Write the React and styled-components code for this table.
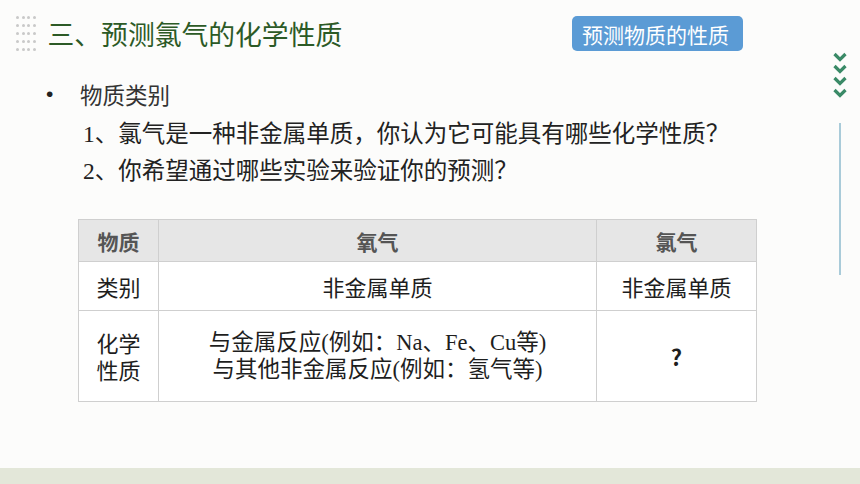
import React from "react";
import styled, { createGlobalStyle } from "styled-components";

const GlobalStyle = createGlobalStyle`
  html, body {
    margin: 0;
    padding: 0;
    background: #fcfcfb;
  }
  body {
    font-family: "Liberation Serif", "Noto Sans CJK SC", serif;
    color: #222;
  }
`;

const Slide = styled.div`
  width: 860px;
  height: 484px;
  display: flex;
  flex-direction: column;
  overflow: hidden;
`;

const Body = styled.div`
  flex: 1;
  display: flex;
`;

const Main = styled.div`
  flex: 1;
  display: flex;
  flex-direction: column;
`;

const Rail = styled.div`
  width: 40px;
  display: flex;
  flex-direction: column;
  align-items: center;
  padding-top: 52px;
`;

const RailLine = styled.div`
  width: 2px;
  height: 152px;
  margin-top: 24px;
  margin-left: -1px;
  background: #a9cbd9;
`;

const Footer = styled.div`
  height: 16px;
  background: #e3e7d9;
`;

const Header = styled.div`
  display: flex;
  align-items: center;
  padding: 16px 77px 0 16px;
  height: 35px;
`;

const Dots = styled.div`
  display: grid;
  grid-template-columns: repeat(4, 3px);
  grid-auto-rows: 3px;
  column-gap: 2.5px;
  row-gap: 5px;
`;

const Dot = styled.span`
  width: 3px;
  height: 3px;
  border-radius: 50%;
  background: #c9c9c9;
`;

const Title = styled.h1`
  flex: 1;
  margin: 0 0 0 12px;
  font-family: "Noto Sans CJK SC", sans-serif;
  font-weight: 400;
  font-size: 26.8px;
  line-height: 35px;
  color: #2c5a26;
`;

const Badge = styled.div`
  height: 35px;
  padding: 0 14px 0 10px;
  display: flex;
  align-items: center;
  border-radius: 5px;
  background: #5b9bd5;
  color: #fff;
  font-family: "Noto Sans CJK SC", sans-serif;
  font-size: 21px;
`;

const Bullet = styled.div`
  display: flex;
  align-items: center;
  margin: 28px 0 0 46px;
  height: 30px;
  font-family: "Noto Sans CJK SC", sans-serif;
  font-size: 22.5px;
  color: #333;
`;

const Dotmark = styled.span`
  width: 34px;
  font-family: "Liberation Sans", sans-serif;
  font-size: 21px;
  color: #222;
`;

const Questions = styled.ol`
  list-style: none;
  margin: 7px 0 0 83px;
  padding: 0;
`;

const Question = styled.li`
  height: 37px;
  line-height: 37px;
  font-size: 23.5px;
  color: #222;
`;

const Table = styled.table`
  margin: 29px 0 0 78px;
  width: 679px;
  border-collapse: collapse;
  font-family: "Liberation Serif", "Noto Sans CJK SC", serif;
  background: #fff;
`;

const Cell = styled.td`
  border: 1px solid #cfcfcf;
  text-align: center;
  vertical-align: middle;
  padding: 0;
  height: ${(p) => p.$h}px;
  font-size: ${(p) => (p.$small ? 22.5 : 22)}px;
  font-weight: ${(p) => (p.$bold ? 700 : 400)};
  line-height: 27px;
  color: #1e1e1e;
  font-family: ${(p) => (p.$sans ? `"Noto Sans CJK SC", sans-serif` : "inherit")};
`;

const HeadCell = styled.th`
  border: 1px solid #cfcfcf;
  background: #e6e6e6;
  height: 41px;
  padding: 0;
  width: ${(p) => (p.$w ? `${p.$w}px` : "auto")};
  font-family: "Noto Sans CJK SC", sans-serif;
  font-size: 21px;
  font-weight: 700;
  color: #555;
`;

const Chevrons = () => (
  <svg width="14" height="47" viewBox="0 0 14 47">
    {[0, 12, 24, 36].map((y) => (
      <path
        key={y}
        d={`M1.5 ${y + 2} L7 ${y + 7.5} L12.5 ${y + 2}`}
        fill="none"
        stroke="#3a8a67"
        strokeWidth="3.2"
      />
    ))}
  </svg>
);

export default function App() {
  return (
    <Slide>
      <GlobalStyle />
      <Body>
        <Main>
          <Header>
            <Dots>
              {Array.from({ length: 20 }).map((_, i) => (
                <Dot key={i} />
              ))}
            </Dots>
            <Title>三、预测氯气的化学性质</Title>
            <Badge>预测物质的性质</Badge>
          </Header>

          <Bullet>
            <Dotmark>•</Dotmark>
            物质类别
          </Bullet>

          <Questions>
            <Question>1、氯气是一种非金属单质，你认为它可能具有哪些化学性质？</Question>
            <Question>2、你希望通过哪些实验来验证你的预测？</Question>
          </Questions>

          <Table>
            <thead>
              <tr>
                <HeadCell $w={79}>物质</HeadCell>
                <HeadCell>氧气</HeadCell>
                <HeadCell $w={159}>氯气</HeadCell>
              </tr>
            </thead>
            <tbody>
              <tr>
                <Cell $h={48} $sans>类别</Cell>
                <Cell $sans>非金属单质</Cell>
                <Cell $sans>非金属单质</Cell>
              </tr>
              <tr>
                <Cell $h={90} $sans>
                  化学
                  <br />
                  性质
                </Cell>
                <Cell $small>
                  与金属反应(例如：Na、Fe、Cu等)
                  <br />
                  与其他非金属反应(例如：氢气等)
                </Cell>
                <Cell $sans $bold>?</Cell>
              </tr>
            </tbody>
          </Table>
        </Main>
        <Rail>
          <Chevrons />
          <RailLine />
        </Rail>
      </Body>
      <Footer />
    </Slide>
  );
}
